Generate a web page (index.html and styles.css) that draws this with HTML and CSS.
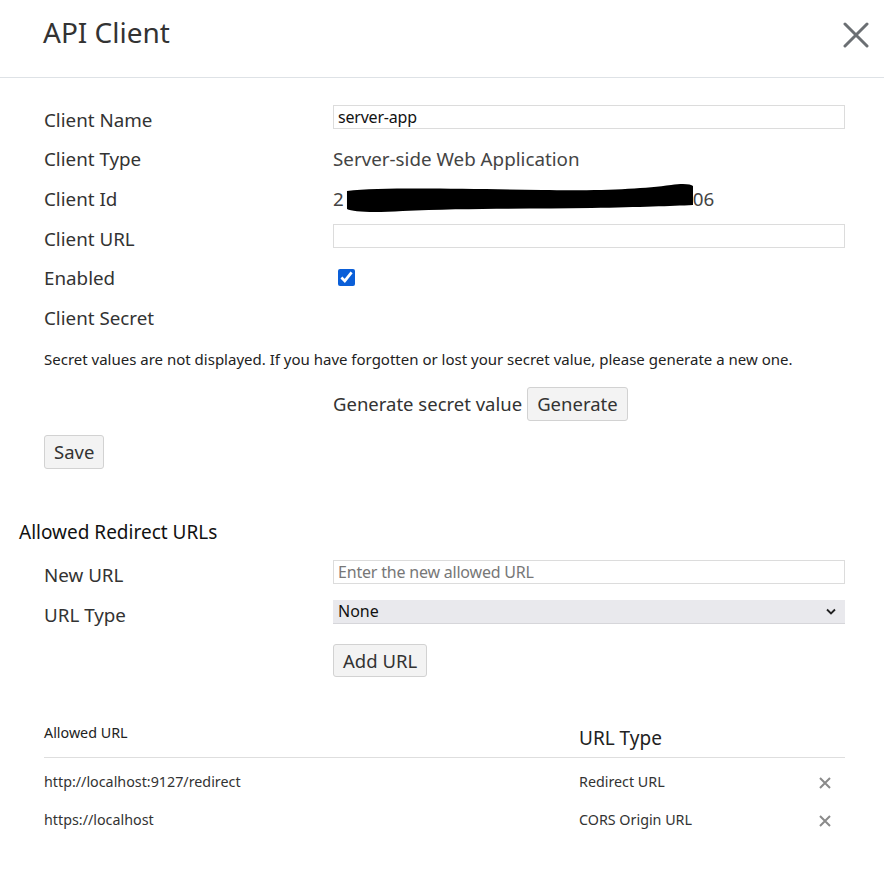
FILE: index.html
```html
<!DOCTYPE html>
<html lang="en">
<head>
<meta charset="utf-8">
<title>API Client</title>
<link rel="stylesheet" href="styles.css">
</head>
<body>
<div class="modal">
  <header class="modal-header">
    <h1 class="modal-title">API Client</h1>
    <button class="close" aria-label="Close">
      <svg width="26" height="26" viewBox="0 0 26 26"><path d="M2 2 L24 24 M24 2 L2 24" stroke="#6b6f73" stroke-width="3" stroke-linecap="round"/></svg>
    </button>
  </header>
  <main class="modal-body">
    <div class="form">
      <div class="grid">
        <div class="label">Client Name</div>
        <div class="value"><input class="text-input" type="text" value="server-app"></div>

        <div class="label">Client Type</div>
        <div class="value text">Server-side Web Application</div>

        <div class="label">Client Id</div>
        <div class="value text id">2<svg class="redact" width="350" height="30" viewBox="0 0 352 30" preserveAspectRatio="none"><path d="M4 8 C40 4 120 6 200 7 C260 8 300 6 330 2 C342 0 350 1 352 3 L352 22 C330 23 300 24 250 25 C190 26 120 25 60 28 C30 30 10 29 4 26 Z" fill="#000"/></svg>06</div>

        <div class="label">Client URL</div>
        <div class="value"><input class="text-input" type="text" value=""></div>

        <div class="label">Enabled</div>
        <div class="value"><input class="check" type="checkbox" checked></div>

        <div class="label">Client Secret</div>
        <div class="value"></div>
      </div>

      <p class="note">Secret values are not displayed. If you have forgotten or lost your secret value, please generate a new one.</p>

      <div class="generate-row">
        <span class="gen-label">Generate secret value</span>
        <button class="btn">Generate</button>
      </div>

      <button class="btn save">Save</button>
    </div>

    <h2 class="section-title">Allowed Redirect URLs</h2>

    <div class="form urls-form">
      <div class="grid">
        <div class="label">New URL</div>
        <div class="value"><input class="text-input" type="text" placeholder="Enter the new allowed URL"></div>

        <div class="label">URL Type</div>
        <div class="value">
          <div class="select">
            <span>None</span>
            <svg width="10" height="7" viewBox="0 0 10 7"><path d="M1 1.5 L5 5.5 L9 1.5" fill="none" stroke="#222" stroke-width="1.8"/></svg>
          </div>
        </div>

        <div class="label"></div>
        <div class="value add"><button class="btn">Add URL</button></div>
      </div>

      <table class="urls">
        <thead>
          <tr>
            <th class="th-url">Allowed URL</th>
            <th class="th-type">URL Type</th>
            <th class="th-del"></th>
          </tr>
        </thead>
        <tbody>
          <tr>
            <td>http://localhost:9127/redirect</td>
            <td>Redirect URL</td>
            <td class="del"><svg width="12" height="12" viewBox="0 0 12 12"><path d="M1 1 L11 11 M11 1 L1 11" stroke="#8a8a8a" stroke-width="2"/></svg></td>
          </tr>
          <tr>
            <td>https://localhost</td>
            <td>CORS Origin URL</td>
            <td class="del"><svg width="12" height="12" viewBox="0 0 12 12"><path d="M1 1 L11 11 M11 1 L1 11" stroke="#8a8a8a" stroke-width="2"/></svg></td>
          </tr>
        </tbody>
      </table>
    </div>
  </main>
</div>
</body>
</html>
```

FILE: styles.css
```css
* { box-sizing: border-box; }

html, body {
  margin: 0;
  padding: 0;
  background: #fff;
}

body {
  font-family: "Noto Sans", "Open Sans", sans-serif;
  color: #333;
  width: 884px;
}

.modal-header {
  height: 78px;
  border-bottom: 1px solid #dee2e6;
  display: flex;
  align-items: flex-start;
  justify-content: space-between;
  padding: 13px 15px 0 43px;
}

.modal-title {
  margin: 0;
  font-weight: 400;
  font-size: 28px;
  line-height: 38px;
  color: #333;
}

.close {
  border: none;
  background: none;
  padding: 0;
  margin-top: 9px;
  width: 26px;
  height: 26px;
  display: flex;
}

.modal-body {
  padding: 22px 39px 0 19px;
}

.form {
  padding-left: 25px;
}

.grid {
  display: grid;
  grid-template-columns: 289px 1fr;
  grid-auto-rows: 39.6px;
  align-items: center;
}

.label {
  font-size: 18.8px;
  color: #333;
}

.value.text {
  font-size: 18.8px;
  color: #444;
}

.id {
  display: flex;
  align-items: center;
}

.redact {
  margin-left: -1px;
  margin-right: 0;
  position: relative;
  top: -1px;
}

.text-input {
  display: block;
  width: 100%;
  height: 24px;
  margin-top: -6px;
  border: 1px solid #dcdcdc;
  border-radius: 0;
  padding: 0 4px;
  font-family: "Noto Sans", sans-serif;
  font-size: 16px;
  color: #111;
  letter-spacing: -0.2px;
  outline: none;
}

.text-input::placeholder {
  color: #777;
}

.check {
  display: block;
  width: 17px;
  height: 17px;
  margin: -2px 0 0 5px;
  accent-color: #0b5fd8;
}

.note {
  margin: 10px 0 0;
  font-size: 15px;
  line-height: 22px;
  color: #222;
}

.generate-row {
  margin: 17px 0 0 289px;
  display: flex;
  align-items: center;
  gap: 5px;
}

.gen-label {
  font-size: 18.5px;
  color: #333;
}

.btn {
  font-family: "Noto Sans", sans-serif;
  font-size: 18.5px;
  color: #333;
  background: #f3f3f3;
  border: 1px solid #d2d2d2;
  border-radius: 3px;
  height: 34px;
  padding: 0 9px;
}

.save {
  margin-top: 14px;
  display: block;
}

.section-title {
  margin: 50px 0 0;
  font-weight: 400;
  font-size: 19px;
  line-height: 26px;
  color: #111;
}

.urls-form {
  margin-top: 11px;
}

.select {
  height: 24px;
  margin-top: -6px;
  background: #e9e9ed;
  border-bottom: 1px solid #d6d6da;
  display: flex;
  align-items: center;
  justify-content: space-between;
  padding: 0 9px 0 5px;
  font-size: 16px;
  color: #111;
}

.grid .add {
  align-self: start;
  padding-top: 9px;
}

.add .btn {
  height: 33px;
}

.urls {
  margin-top: 49px;
  width: 801px;
  border-collapse: collapse;
  table-layout: fixed;
}

.urls th {
  font-weight: 400;
  text-align: left;
  border-bottom: 1px solid #dedede;
  padding: 0 0 6px;
}

.th-url {
  width: 535px;
  font-size: 14.3px;
  line-height: 20px;
  color: #222;
  vertical-align: top;
}

.th-type {
  font-size: 19px;
  line-height: 26px;
  color: #222;
  vertical-align: bottom;
  padding-top: 2px !important;
}

.th-del {
  width: 40px;
}

.urls td {
  font-size: 14.3px;
  color: #333;
  height: 40px;
  padding: 0;
  vertical-align: middle;
}

.urls tbody tr:first-child td {
  height: 42px;
  padding-top: 4px;
}

.del {
  text-align: left;
  padding-left: 14px !important;
}

.del svg {
  display: block;
  margin-top: 3px;
}
```
